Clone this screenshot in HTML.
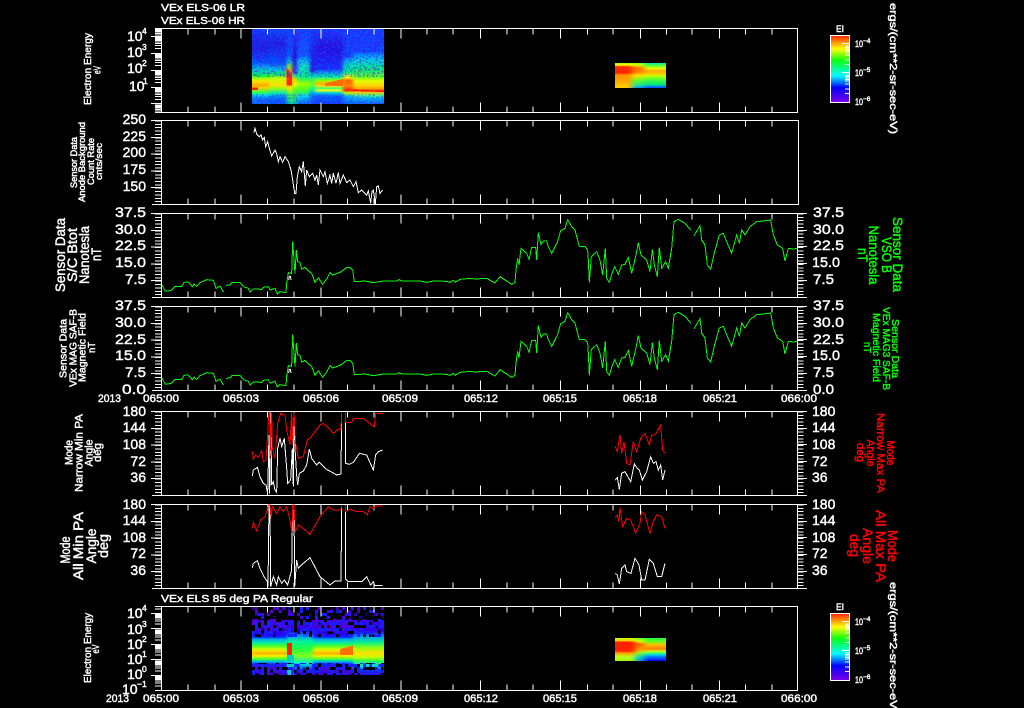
<!DOCTYPE html>
<html><head><meta charset="utf-8"><title>VEx ELS plot</title>
<style>
html,body{margin:0;padding:0;background:#000;width:1024px;height:708px;overflow:hidden}
svg{display:block}
text{font-family:"Liberation Sans",sans-serif}
.w{fill:#fff;stroke:#fff;stroke-width:.45}
.g{fill:#00ff00;stroke:#00ff00;stroke-width:.45}
.r{fill:#ff0000;stroke:#ff0000;stroke-width:.45}
.c{shape-rendering:crispEdges}
.pl{fill:none;stroke-width:1;vector-effect:non-scaling-stroke;shape-rendering:crispEdges}
.pl polyline{vector-effect:non-scaling-stroke}
</style></head><body>
<svg xmlns="http://www.w3.org/2000/svg" width="1024" height="708" viewBox="0 0 1024 708">
<defs>
<linearGradient id="cb" x1="0" y1="0" x2="0" y2="1"><stop offset="0" stop-color="#ff2000"/><stop offset=".1" stop-color="#ff9000"/><stop offset=".2" stop-color="#ffff00"/><stop offset=".37" stop-color="#10ff10"/><stop offset=".6" stop-color="#00ffff"/><stop offset=".78" stop-color="#0000ff"/><stop offset="1" stop-color="#8000e8"/></linearGradient>

<linearGradient id="a" x1="0" y1="0" x2="0" y2="1"><stop offset="0" stop-color="#0848ff"/><stop offset=".09" stop-color="#1030f0"/><stop offset=".27" stop-color="#1820e0"/><stop offset=".44" stop-color="#0050ff"/><stop offset=".51" stop-color="#00a8f0"/><stop offset=".58" stop-color="#00e0a0"/><stop offset=".62" stop-color="#00ff40"/><stop offset=".66" stop-color="#a0ff00"/><stop offset=".70" stop-color="#ffe000"/><stop offset=".75" stop-color="#ffa800"/><stop offset=".78" stop-color="#ffd000"/><stop offset=".84" stop-color="#40ff40"/><stop offset=".88" stop-color="#00e0e0"/><stop offset=".92" stop-color="#0080ff"/><stop offset="1" stop-color="#1060ff"/></linearGradient>
<linearGradient id="b" x1="0" y1="0" x2="0" y2="1"><stop offset="0" stop-color="#0848ff"/><stop offset=".2" stop-color="#1820e0"/><stop offset=".45" stop-color="#0050ff"/><stop offset=".55" stop-color="#00c8e0"/><stop offset=".6" stop-color="#00f060"/><stop offset=".66" stop-color="#c0ff00"/><stop offset=".75" stop-color="#ffe000"/><stop offset=".8" stop-color="#80ff20"/><stop offset=".86" stop-color="#00e0c0"/><stop offset=".92" stop-color="#0070ff"/><stop offset="1" stop-color="#1050ff"/></linearGradient>
<linearGradient id="hot" x1="0" y1="0" x2="0" y2="1"><stop offset="0" stop-color="#1040ff"/><stop offset=".35" stop-color="#0060ff"/><stop offset=".44" stop-color="#00d0c0"/><stop offset=".5" stop-color="#a0ff00"/><stop offset=".56" stop-color="#ffa000"/><stop offset=".72" stop-color="#ffc000"/><stop offset=".8" stop-color="#ffe000"/><stop offset=".87" stop-color="#40ff30"/><stop offset="1" stop-color="#00e8a0"/></linearGradient>
<linearGradient id="d" x1="0" y1="0" x2="0" y2="1"><stop offset="0" stop-color="#1040ff"/><stop offset=".36" stop-color="#3000e0"/><stop offset=".58" stop-color="#2020ff"/><stop offset=".62" stop-color="#00ff80"/><stop offset=".67" stop-color="#ffc000"/><stop offset=".73" stop-color="#ffff00"/><stop offset=".8" stop-color="#60ff20"/><stop offset="1" stop-color="#00d0a0"/></linearGradient>
<linearGradient id="e" x1="0" y1="0" x2="0" y2="1"><stop offset="0" stop-color="#1040ff"/><stop offset=".36" stop-color="#0860ff"/><stop offset=".42" stop-color="#00c0f0"/><stop offset=".49" stop-color="#00f0c0"/><stop offset=".64" stop-color="#00f080"/><stop offset=".73" stop-color="#a0ff00"/><stop offset=".82" stop-color="#40ff30"/><stop offset=".91" stop-color="#00d0ff"/><stop offset="1" stop-color="#1060ff"/></linearGradient>
<linearGradient id="f" x1="0" y1="0" x2="0" y2="1"><stop offset="0" stop-color="#1040ff"/><stop offset=".55" stop-color="#2010e0"/><stop offset=".62" stop-color="#00e0c0"/><stop offset=".73" stop-color="#60ff20"/><stop offset=".8" stop-color="#00ffa0"/><stop offset=".87" stop-color="#0080ff"/><stop offset="1" stop-color="#2040ff"/></linearGradient>
<linearGradient id="g" x1="0" y1="0" x2="0" y2="1"><stop offset="0" stop-color="#1040ff"/><stop offset=".25" stop-color="#2010e0"/><stop offset=".53" stop-color="#1030ff"/><stop offset=".58" stop-color="#00a0f0"/><stop offset=".64" stop-color="#00f0a0"/><stop offset=".69" stop-color="#a0ff00"/><stop offset=".73" stop-color="#ffb000"/><stop offset=".76" stop-color="#ffe000"/><stop offset=".79" stop-color="#40ff80"/><stop offset=".82" stop-color="#ffff00"/><stop offset=".85" stop-color="#00d0e0"/><stop offset=".9" stop-color="#0060ff"/><stop offset="1" stop-color="#1040ff"/></linearGradient>
<linearGradient id="h" x1="0" y1="0" x2="0" y2="1"><stop offset="0" stop-color="#1040ff"/><stop offset=".36" stop-color="#1040ff"/><stop offset=".42" stop-color="#00b0f0"/><stop offset=".49" stop-color="#00e0c0"/><stop offset=".58" stop-color="#00f080"/><stop offset=".64" stop-color="#ffff00"/><stop offset=".69" stop-color="#ff6000"/><stop offset=".76" stop-color="#ff8000"/><stop offset=".82" stop-color="#ff2000"/><stop offset=".85" stop-color="#c0ff00"/><stop offset=".9" stop-color="#00b0ff"/><stop offset="1" stop-color="#1060ff"/></linearGradient>
<linearGradient id="i" x1="0" y1="0" x2="0" y2="1"><stop offset="0" stop-color="#1040ff"/><stop offset=".29" stop-color="#1040ff"/><stop offset=".36" stop-color="#00a0ff"/><stop offset=".42" stop-color="#00d0e0"/><stop offset=".53" stop-color="#00f080"/><stop offset=".64" stop-color="#60ff20"/><stop offset=".69" stop-color="#e0ff00"/><stop offset=".76" stop-color="#ffd000"/><stop offset=".8" stop-color="#ffa000"/><stop offset=".82" stop-color="#ff2000"/><stop offset=".84" stop-color="#ffc000"/><stop offset=".89" stop-color="#40ff80"/><stop offset=".92" stop-color="#00c0ff"/><stop offset="1" stop-color="#1060ff"/></linearGradient>

<linearGradient id="p" x1="0" y1="0" x2="0" y2="1"><stop offset="0" stop-color="#5000d0"/><stop offset=".3" stop-color="#5000e0"/><stop offset=".42" stop-color="#2000ff"/><stop offset=".45" stop-color="#0040ff"/><stop offset=".47" stop-color="#00a0f0"/><stop offset=".52" stop-color="#00e8b0"/><stop offset=".57" stop-color="#40ff30"/><stop offset=".62" stop-color="#d0ff00"/><stop offset=".66" stop-color="#ffd000"/><stop offset=".68" stop-color="#ffb000"/><stop offset=".72" stop-color="#f0f000"/><stop offset=".76" stop-color="#60ff20"/><stop offset=".79" stop-color="#00e0a0"/><stop offset=".81" stop-color="#00a0ff"/><stop offset=".84" stop-color="#2020ff"/><stop offset=".9" stop-color="#4010e0"/><stop offset="1" stop-color="#4000d0"/></linearGradient>
<linearGradient id="p2" x1="0" y1="0" x2="0" y2="1"><stop offset="0" stop-color="#5000d0"/><stop offset=".35" stop-color="#3000f0"/><stop offset=".42" stop-color="#0090f0"/><stop offset=".5" stop-color="#00f0a0"/><stop offset=".62" stop-color="#20ff40"/><stop offset=".72" stop-color="#80ff20"/><stop offset=".82" stop-color="#00f0c0"/><stop offset=".88" stop-color="#0090f0"/><stop offset=".93" stop-color="#2020ff"/><stop offset="1" stop-color="#4000d0"/></linearGradient>
<linearGradient id="p3" x1="0" y1="0" x2="0" y2="1"><stop offset="0" stop-color="#5000d0"/><stop offset=".36" stop-color="#3000f0"/><stop offset=".44" stop-color="#00a0f0"/><stop offset=".52" stop-color="#00f090"/><stop offset=".6" stop-color="#90ff10"/><stop offset=".68" stop-color="#ffe000"/><stop offset=".74" stop-color="#c0ff00"/><stop offset=".8" stop-color="#20ff60"/><stop offset=".88" stop-color="#00d0e0"/><stop offset=".92" stop-color="#0040ff"/><stop offset="1" stop-color="#4000d0"/></linearGradient>

<linearGradient id="s1" x1="0" y1="0" x2="0" y2="1"><stop offset="0" stop-color="#a0ff00"/><stop offset=".08" stop-color="#ffff00"/><stop offset=".15" stop-color="#ff3000"/><stop offset=".39" stop-color="#ff2000"/><stop offset=".48" stop-color="#ff9000"/><stop offset=".68" stop-color="#ffa000"/><stop offset=".88" stop-color="#ffc000"/><stop offset="1" stop-color="#ffd000"/></linearGradient>
<linearGradient id="s2" x1="0" y1="0" x2="0" y2="1"><stop offset="0" stop-color="#80ff20"/><stop offset=".08" stop-color="#e0ff00"/><stop offset=".2" stop-color="#ff7000"/><stop offset=".35" stop-color="#ff8000"/><stop offset=".5" stop-color="#ffe000"/><stop offset=".7" stop-color="#60ff20"/><stop offset=".9" stop-color="#20e0a0"/><stop offset="1" stop-color="#0090ff"/></linearGradient>
<linearGradient id="s3" x1="0" y1="0" x2="0" y2="1"><stop offset="0" stop-color="#00e0d0"/><stop offset=".08" stop-color="#40ff40"/><stop offset=".21" stop-color="#e0ff00"/><stop offset=".31" stop-color="#ffb000"/><stop offset=".41" stop-color="#ffc000"/><stop offset=".52" stop-color="#c0ff00"/><stop offset=".68" stop-color="#40ff40"/><stop offset=".88" stop-color="#00e080"/><stop offset=".94" stop-color="#0080ff"/><stop offset="1" stop-color="#2040ff"/></linearGradient>
<linearGradient id="t1" x1="0" y1="0" x2="0" y2="1"><stop offset="0" stop-color="#c0ff00"/><stop offset=".12" stop-color="#ffd000"/><stop offset=".18" stop-color="#ff2000"/><stop offset=".56" stop-color="#ff2000"/><stop offset=".66" stop-color="#ffa000"/><stop offset=".81" stop-color="#c0ff20"/><stop offset="1" stop-color="#a0ff00"/></linearGradient>
<linearGradient id="t2" x1="0" y1="0" x2="0" y2="1"><stop offset="0" stop-color="#60ff20"/><stop offset=".15" stop-color="#e0ff00"/><stop offset=".27" stop-color="#ff6000"/><stop offset=".52" stop-color="#ffa000"/><stop offset=".66" stop-color="#80ff20"/><stop offset=".85" stop-color="#00d0d0"/><stop offset="1" stop-color="#00a0d0"/></linearGradient>
<linearGradient id="t3" x1="0" y1="0" x2="0" y2="1"><stop offset="0" stop-color="#20ff40"/><stop offset=".15" stop-color="#60ff20"/><stop offset=".29" stop-color="#ffc000"/><stop offset=".47" stop-color="#ff8000"/><stop offset=".59" stop-color="#c0ff00"/><stop offset=".69" stop-color="#00ffc0"/><stop offset=".81" stop-color="#0080ff"/><stop offset="1" stop-color="#1000ff"/></linearGradient>

<filter id="bx" filterUnits="userSpaceOnUse" x="230" y="0" width="180" height="708" color-interpolation-filters="sRGB"><feGaussianBlur stdDeviation="1.6 0"/></filter>
<filter id="bs" filterUnits="userSpaceOnUse" x="590" y="0" width="100" height="708" color-interpolation-filters="sRGB"><feGaussianBlur stdDeviation="3 0"/></filter>
<filter id="nP" x="0" y="0" width="1" height="1" color-interpolation-filters="sRGB"><feTurbulence type="fractalNoise" baseFrequency=".55" numOctaves="1" seed="3"/><feColorMatrix values="0 0 0 0 .35  0 0 0 0 0  0 0 0 0 .9  6 0 0 0 -3"/></filter>
<filter id="nC" x="0" y="0" width="1" height="1" color-interpolation-filters="sRGB"><feTurbulence type="fractalNoise" baseFrequency=".6" numOctaves="1" seed="9"/><feColorMatrix values="0 0 0 0 0  0 0 0 0 .6  0 0 0 0 1  6 0 0 0 -3.4"/></filter>
<filter id="kA" filterUnits="userSpaceOnUse" x="252" y="607" width="132" height="68" color-interpolation-filters="sRGB"><feTurbulence type="fractalNoise" baseFrequency=".31" numOctaves="1" seed="5"/><feColorMatrix values="0 0 0 0 0  0 0 0 0 0  0 0 0 0 0  30 0 0 0 -14.1" result="t"/><feFlood x="253" y="608" width="1" height="1" flood-color="#000"/><feComposite width="3" height="3"/><feTile result="q"/><feComposite in="t" in2="q" operator="in"/><feMorphology operator="dilate" radius="1"/></filter>
<filter id="kB" filterUnits="userSpaceOnUse" x="252" y="607" width="132" height="68" color-interpolation-filters="sRGB"><feTurbulence type="fractalNoise" baseFrequency=".31" numOctaves="1" seed="17"/><feColorMatrix values="0 0 0 0 0  0 0 0 0 0  0 0 0 0 0  30 0 0 0 -18" result="t"/><feFlood x="253" y="608" width="1" height="1" flood-color="#000"/><feComposite width="3" height="3"/><feTile result="q"/><feComposite in="t" in2="q" operator="in"/><feMorphology operator="dilate" radius="1"/></filter>
<filter id="kD" filterUnits="userSpaceOnUse" x="252" y="607" width="132" height="68" color-interpolation-filters="sRGB"><feTurbulence type="fractalNoise" baseFrequency=".31" numOctaves="1" seed="23"/><feColorMatrix values="0 0 0 0 .08  0 0 0 0 .12  0 0 0 0 1  30 0 0 0 -16.5" result="t"/><feFlood x="253" y="608" width="1" height="1" flood-color="#000"/><feComposite width="3" height="3"/><feTile result="q"/><feComposite in="t" in2="q" operator="in"/><feMorphology operator="dilate" radius="1"/></filter>

<clipPath id="cl1"><rect x="150" y="28" width="12" height="85"/></clipPath>
<clipPath id="cl7"><rect x="150" y="606" width="12" height="85"/></clipPath>
<clipPath id="sA"><rect x="252" y="29" width="132" height="75"/></clipPath>
<clipPath id="sB"><rect x="252" y="607" width="132" height="68"/></clipPath>
<clipPath id="sC"><rect x="615" y="63" width="51" height="25"/></clipPath>
<clipPath id="sD"><rect x="615" y="638" width="51" height="23"/></clipPath>
<clipPath id="sE"><rect x="252" y="607" width="132" height="30"/><rect x="252" y="663" width="132" height="12"/></clipPath>
<clipPath id="sF"><rect x="252" y="607" width="132" height="13"/></clipPath>

<path id="xt" d="M188 0v6M215 0v6M267.5 0v6M294 0v6M347.5 0v6M374 0v6M427 0v6M453 0v6M507 0v6M533 0v6M587.5 0v6M613 0v6M666.5 0v6M692 0v6M745.5 0v6M772 0v6M241 0v10M321 0v10M401 0v10M480.5 0v10M560.5 0v10M640.5 0v10M719.5 0v10M188 84v-6M215 84v-6M267.5 84v-6M294 84v-6M347.5 84v-6M374 84v-6M427 84v-6M453 84v-6M507 84v-6M533 84v-6M587.5 84v-6M613 84v-6M666.5 84v-6M692 84v-6M745.5 84v-6M772 84v-6M241 84v-10M321 84v-10M401 84v-10M480.5 84v-10M560.5 84v-10M640.5 84v-10M719.5 84v-10"/>
<path id="ly" d="M162 0H151M162 16.8H151M162 33.6H151M162 50.4H151M162 67.2H151"/>
<path id="dec1" d="M155 -5.06H161M155 -8.01H161M155 -10.11H161M155 -11.74H161M155 -13.07H161M155 -14.2H161M155 -15.17H161M155 -16.03H161"/>
<path id="dec7" d="M155 -4.64H161M155 -7.35H161M155 -9.27H161M155 -10.76H161M155 -11.98H161M155 -13.01H161M155 -13.9H161M155 -14.7H161"/>
<path id="cbt" d="M842 0H849M845 2.4H849M845 4H849M845 5.4H849M845 6.8H849M845 8.7H849M845 11.7H849M845 16.4H849M845 21H849"/>
</defs>
<rect width="1024" height="708" fill="#000"/>

<!-- spectrogram 1 -->
<g class="c" clip-path="url(#sA)">
<g filter="url(#bx)">
<rect x="240" y="29" width="29" height="75" fill="url(#a)"/>
<rect x="269" y="29" width="18" height="75" fill="url(#b)"/>
<rect x="287" y="29" width="5.5" height="75" fill="url(#hot)"/>
<rect x="292.5" y="29" width="4.5" height="75" fill="url(#d)"/>
<rect x="297" y="29" width="13" height="75" fill="url(#e)"/>
<rect x="310" y="29" width="5" height="75" fill="url(#f)"/>
<rect x="315" y="29" width="28" height="75" fill="url(#g)"/>
<rect x="343" y="29" width="10" height="75" fill="url(#h)"/>
<rect x="353" y="29" width="43" height="75" fill="url(#i)"/>
</g>
<polygon points="286.7,68.7 291.7,73.7 292.3,85.3 286.7,85.3" fill="#ff2800"/>
<rect x="252" y="87.5" width="6" height="2.5" fill="#ff2000"/>
<polygon points="325,83 343,79 343,86 325,86" fill="#ff7000"/>
<polygon points="353,89.5 384,91 384,92 353,91" fill="#ff1000"/>
<rect x="252" y="29" width="132" height="48" filter="url(#nP)" opacity=".55"/>
<rect x="252" y="29" width="132" height="48" filter="url(#nC)" opacity=".5"/>
<rect x="252" y="94" width="132" height="10" filter="url(#nC)" opacity=".6"/>
<rect x="252" y="94" width="132" height="10" filter="url(#nP)" opacity=".4"/>
</g>
<!-- spectrogram 1 right -->
<g class="c" clip-path="url(#sC)"><g filter="url(#bs)">
<rect x="600" y="63" width="32" height="25" fill="url(#s1)"/>
<rect x="632" y="63" width="12" height="25" fill="url(#s2)"/>
<rect x="644" y="63" width="36" height="25" fill="url(#s3)"/>
</g></g>
<!-- spectrogram 7 -->
<g class="c" clip-path="url(#sB)">
<g filter="url(#bx)">
<rect x="240" y="607" width="47" height="68" fill="url(#p)"/>
<rect x="287" y="607" width="26" height="68" fill="url(#p2)"/>
<rect x="313" y="607" width="40" height="68" fill="url(#p)"/>
<rect x="353" y="607" width="43" height="68" fill="url(#p3)"/>
</g>
<rect x="287" y="643" width="5" height="13" fill="#ff2000"/>
<rect x="287" y="655" width="7" height="20" fill="#00d0c8"/>
<polygon points="340,649 353,645.5 353,655 340,655" fill="#ff7000"/>
<g clip-path="url(#sE)"><rect x="252" y="607" width="132" height="68" filter="url(#kD)"/><rect x="252" y="607" width="132" height="68" filter="url(#kB)"/></g>
<g clip-path="url(#sF)"><rect x="252" y="607" width="132" height="68" filter="url(#kA)"/></g>
<rect x="294" y="618" width="3" height="14" fill="#000"/>
</g>
<!-- spectrogram 7 right -->
<g class="c" clip-path="url(#sD)"><g filter="url(#bs)">
<rect x="600" y="638" width="35" height="23" fill="url(#t1)"/>
<rect x="635" y="638" width="9" height="23" fill="url(#t2)"/>
<rect x="644" y="638" width="36" height="23" fill="url(#t3)"/>
</g></g>

<!-- Frames -->
<g stroke="#fff" stroke-width="1" fill="none" class="c">
<path d="M155 28.5H797.5V112.5H155M161.5 28.5V112.5"/>
<path d="M152 120.5H798.5V204.5H152M161.5 120.5V204.5"/>
<path d="M152 213.5H807M152 297.5H807M161.5 213.5V297.5M797.5 213.5V297.5"/>
<path d="M152 306.5H807M152 390.5H807M161.5 306.5V390.5M797.5 306.5V390.5"/>
<path d="M152 411.5H807M152 495.5H807M161.5 411.5V495.5M797.5 411.5V495.5"/>
<path d="M152 504.5H807M152 588.5H807M161.5 504.5V588.5M797.5 504.5V588.5"/>
<path d="M155 606.5H797.5V690.5H155M161.5 606.5V690.5"/>
<use href="#xt" y="28.5"/><use href="#xt" y="120.5"/><use href="#xt" y="213.5"/><use href="#xt" y="306.5"/><use href="#xt" y="411.5"/><use href="#xt" y="504.5"/><use href="#xt" y="606.5"/>
<g clip-path="url(#cl1)">
<use href="#dec1" y="36.5"/><use href="#dec1" y="53.5"/><use href="#dec1" y="70.5"/><use href="#dec1" y="87.5"/><use href="#dec1" y="104.5"/><use href="#dec1" y="121"/><use href="#dec1" y="45"/>
<path d="M151 36.5H161M151 53.5H161M151 70.5H161M151 87.5H161M151 103.5H161"/>
</g>
<g clip-path="url(#cl7)">
<use href="#dec7" y="613.5"/><use href="#dec7" y="628.5"/><use href="#dec7" y="644.5"/><use href="#dec7" y="659.5"/><use href="#dec7" y="675.5"/><use href="#dec7" y="690.5"/>
<path d="M151 613.5H161M151 628.5H161M151 644.5H161M151 659.5H161M151 675.5H161"/>
</g>
<!-- hatch -->
<g stroke-width="6" stroke-dasharray="1 2.36">
<path d="M158 120.5V204.5M158 213.5V297.5M158 306.5V390.5M158 411.5V495.5M158 504.5V588.5"/>
<path d="M800.5 213.5V297.5M800.5 306.5V390.5M800.5 411.5V495.5M800.5 504.5V588.5"/>
</g>
<use href="#ly" y="120.5"/><use href="#ly" y="213.5"/><use href="#ly" y="306.5"/><use href="#ly" y="411.5"/><use href="#ly" y="504.5"/>
<path d="M797 230.5H807M797 246.5H807M797 263.5H807M797 280.5H807M797 323.5H807M797 339.5H807M797 356.5H807M797 373.5H807M797 428.5H807M797 444.5H807M797 461.5H807M797 478.5H807M797 521.5H807M797 537.5H807M797 554.5H807M797 571.5H807"/>
<!-- colorbars -->
<rect x="830.5" y="35.5" width="19" height="67" fill="url(#cb)" stroke="#fff"/>
<rect x="830.5" y="613.5" width="19" height="67" fill="url(#cb)" stroke="#fff"/>
<use href="#cbt" y="43.5"/><use href="#cbt" y="72.5"/><use href="#cbt" y="621.5"/><use href="#cbt" y="650.5"/>
</g>

<!-- Panel 2 curve -->
<g transform="scale(.33333)" class="pl" stroke="#fff">
<polyline class="pl" points="762,397 765,385 770,402 778,410 783,405 788,420 793,412 797,440 803,425 808,445 815,468 825,450 830,462 835,485 840,470 848,487 855,470 865,485 873,510 878,540 884,580 888,580 892,530 898,500 905,515 910,485 916,558 920,510 928,530 938,520 945,540 950,525 955,555 960,510 965,520 970,530 975,515 982,550 990,525 995,550 1000,520 1008,550 1015,518 1020,550 1030,525 1040,548 1050,540 1060,560 1068,545 1075,578 1085,570 1100,585 1105,572 1112,610 1116,575 1120,570 1126,612 1130,560 1135,558 1140,580 1148,570"/>
</g>

<!-- Panel 3/4 curves -->
<g transform="translate(0,205) scale(.33333)" class="pl" stroke="#00ff00">
<g id="m1">
<polyline class="pl" points="485,238 495,258 512,257 525,245 545,244 552,232 565,231 577,245 582,237 590,244 600,233 620,224 640,226 648,250 660,243 670,261"/>
<polyline class="pl" points="678,241 690,240 695,233 720,232 730,245 745,250 750,261 760,252 785,253 790,247 805,245 810,255 825,250 832,267 840,260 858,263 860,235 865,203 875,205 878,110 882,165 885,205 889,135 893,170 900,172 905,192 915,187 925,198 935,205 945,232 955,218 968,238 980,222 990,203 998,210 1020,202 1040,188 1050,187 1058,195 1063,230 1095,228 1120,233 1150,228 1190,228 1197,224 1205,228 1260,228"/>
<polyline class="pl" stroke="#fff" points="866,225 868,214 871,214 873,225"/>
</g>
<use href="#m1" y="279"/>
</g>
<g transform="translate(420,205) scale(.33333)" class="pl" stroke="#00ff00">
<g id="m2">
<polyline class="pl" points="0,228 20,232 40,228 80,229 90,232 100,226 105,232 120,223 150,220 165,222 200,220 225,234 240,215 255,225 275,238 285,232 288,195 293,160 297,180 303,130 312,138 320,145 327,163 335,127 347,127 350,165 355,83 363,118 372,107 380,108 385,125 395,145 405,125 412,112 422,77 435,70 443,44 455,65 465,75 478,125 495,125 503,135 505,165 508,232 514,155 530,140 540,165 548,210 556,130 560,220 568,232 576,205 584,185 595,208 605,180 615,178 625,157 635,205 648,150 655,113 663,150 680,165 690,200 697,133 703,180 712,215 718,127 725,190 737,170 745,190 755,130 762,50 775,43 795,55 812,75"/>
<polyline class="pl" points="822,92 840,62 845,105 855,120 862,180 872,192 884,140 898,90"/>
</g>
<use href="#m2" y="279"/>
</g>
<g transform="translate(720,205) scale(.33333)" class="pl" stroke="#00ff00">
<g id="m3"><polyline class="pl" points="-2,90 10,85 20,110 35,145 50,90 58,115 65,75 75,90 90,65 110,50 130,48 152,45 160,90 172,120 188,130 195,168 205,130 220,132 232,130"/></g>
<use href="#m3" y="279"/>
</g>

<!-- Panel 5/6 curves -->
<g transform="translate(240,405) scale(.33333)" class="pl">
<polyline class="pl" stroke="#fff" points="37,213 40,195 52,187 60,215 70,235 78,240 83,265 87,90 89,265 92,22 95,240 100,230 105,255 110,262 113,130 120,100 125,125 133,100 140,190 143,235 152,225 157,130 160,245 162,22 165,130 170,210 173,240 178,205 190,198 200,180 208,132 215,160 230,180 238,172 258,192 278,203 290,210 303,207 305,22"/>
<polyline class="pl" stroke="#fff" points="317,22 317,175 328,178 340,172 358,145 380,150 400,195 407,150 415,140 428,135"/>
<polyline class="pl" stroke="#ff0000" points="37,140 40,163 47,150 55,157 65,137 70,170 78,165 83,90 87,22 90,22 90,160 95,22 96,125 105,160 113,55 122,25 135,30 140,75 150,120 155,22 157,118 162,22 167,115 175,160 190,155 202,105 212,97 240,60 248,55 262,65 280,85 295,72 303,75 305,22"/>
<polyline class="pl" stroke="#ff0000" points="317,22 317,52 335,52 340,40 370,40 395,60 403,65 407,25 428,25"/>
<polyline class="pl" stroke="#fff" points="37,488 40,475 52,467 60,490 72,515 82,530 84,545 87,300 90,300 92,545 100,515 110,540 115,515 125,535 133,525 143,540 155,495 158,300 162,300 164,545 170,465 175,490 190,475 210,458 240,515 270,540 285,528 303,528 305,300"/>
<polyline class="pl" stroke="#fff" points="317,300 317,522 325,530 345,530 365,530 380,515 392,540 400,530 405,542 428,542"/>
<polyline class="pl" stroke="#ff0000" points="37,370 40,352 50,378 62,345 75,335 80,320 85,300 90,300 93,340 97,305 110,325 120,305 130,320 140,305 150,345 156,382 158,300 162,300 166,380 175,360 195,375 210,388 240,335 265,305 280,315 303,315 305,300"/>
<polyline class="pl" stroke="#ff0000" points="317,300 317,320 330,312 350,320 370,320 382,330 390,305 400,312 405,303 428,303"/>
</g>
<g transform="translate(600,400) scale(.33333)" class="pl">
<polyline class="pl" stroke="#ff0000" points="46,140 52,155 60,103 65,160 72,125 80,190 90,195 100,125 110,155 122,115 135,100 148,135 155,105 165,105 182,75 188,150 195,160"/>
<polyline class="pl" stroke="#fff" points="46,240 52,232 58,268 65,220 75,215 92,245 103,192 112,205 118,210 127,240 140,215 152,170 160,190 168,185 175,210 182,195 188,240 195,210"/>
<polyline class="pl" stroke="#ff0000" points="46,352 52,345 57,365 60,322 68,380 80,355 92,360 107,400 120,370 125,335 135,345 150,400 160,365 170,345 185,350 195,385"/>
<polyline class="pl" stroke="#fff" points="46,520 52,525 58,552 65,505 75,495 80,515 93,520 105,475 117,495 125,540 135,540 148,478 160,490 172,530 185,530 195,490"/>
</g>

<!-- Titles -->
<g class="w" font-size="10.5">
<text x="161" y="11" textLength="84" lengthAdjust="spacingAndGlyphs">VEx ELS-06 LR</text>
<text x="161" y="24" textLength="84" lengthAdjust="spacingAndGlyphs">VEx ELS-06 HR</text>
<text x="161" y="602" textLength="152" lengthAdjust="spacingAndGlyphs">VEx ELS 85 deg PA Regular</text>
</g>

<!-- Left y tick labels -->
<g class="w" font-size="14" text-anchor="end">
<text x="146" y="124">250</text><text x="146" y="141">225</text><text x="146" y="157">200</text><text x="146" y="174">175</text><text x="146" y="191">150</text>
<text x="146" y="217" textLength="31" lengthAdjust="spacingAndGlyphs">37.5</text><text x="146" y="234" textLength="31" lengthAdjust="spacingAndGlyphs">30.0</text><text x="146" y="250" textLength="31" lengthAdjust="spacingAndGlyphs">22.5</text><text x="146" y="267" textLength="31" lengthAdjust="spacingAndGlyphs">15.0</text><text x="146" y="284" textLength="21" lengthAdjust="spacingAndGlyphs">7.5</text>
<text x="146" y="310" textLength="31" lengthAdjust="spacingAndGlyphs">37.5</text><text x="146" y="327" textLength="31" lengthAdjust="spacingAndGlyphs">30.0</text><text x="146" y="344" textLength="31" lengthAdjust="spacingAndGlyphs">22.5</text><text x="146" y="360" textLength="31" lengthAdjust="spacingAndGlyphs">15.0</text><text x="146" y="377" textLength="21" lengthAdjust="spacingAndGlyphs">7.5</text><text x="146" y="394" textLength="24" lengthAdjust="spacingAndGlyphs">0.0</text>
<text x="146" y="416">180</text><text x="146" y="432">144</text><text x="146" y="449">108</text><text x="146" y="466">72</text><text x="146" y="482">36</text>
<text x="146" y="509">180</text><text x="146" y="525">144</text><text x="146" y="542">108</text><text x="146" y="558">72</text><text x="146" y="575">36</text>
</g>
<!-- Log labels -->
<g class="w" font-size="14">
<text x="127" y="41">10</text><text x="127" y="57">10</text><text x="127" y="73">10</text><text x="129" y="91">10</text>
<text x="127" y="618">10</text><text x="127" y="634">10</text><text x="127" y="649">10</text><text x="127" y="664">10</text><text x="127" y="679">10</text><text x="122" y="694">10</text>
</g>
<g class="w" font-size="8.5">
<text x="142" y="34">4</text><text x="142" y="50">3</text><text x="142" y="66">2</text><text x="143" y="84">1</text>
<text x="142" y="611">4</text><text x="142" y="627">3</text><text x="142" y="642">2</text><text x="142" y="657">1</text><text x="142" y="672">0</text><text x="137" y="687">−1</text>
</g>

<!-- Right y tick labels -->
<g class="w" font-size="14">
<text x="813" y="217" textLength="31" lengthAdjust="spacingAndGlyphs">37.5</text><text x="813" y="234" textLength="31" lengthAdjust="spacingAndGlyphs">30.0</text><text x="813" y="250" textLength="31" lengthAdjust="spacingAndGlyphs">22.5</text><text x="812" y="267" textLength="28" lengthAdjust="spacingAndGlyphs">15.0</text><text x="813" y="284" textLength="21" lengthAdjust="spacingAndGlyphs">7.5</text>
<text x="813" y="310" textLength="31" lengthAdjust="spacingAndGlyphs">37.5</text><text x="813" y="327" textLength="31" lengthAdjust="spacingAndGlyphs">30.0</text><text x="813" y="344" textLength="31" lengthAdjust="spacingAndGlyphs">22.5</text><text x="812" y="360" textLength="28" lengthAdjust="spacingAndGlyphs">15.0</text><text x="813" y="377" textLength="21" lengthAdjust="spacingAndGlyphs">7.5</text><text x="813" y="394" textLength="21" lengthAdjust="spacingAndGlyphs">0.0</text>
<text x="812" y="416">180</text><text x="812" y="432">144</text><text x="812" y="449">108</text><text x="812" y="466">72</text><text x="812" y="482">36</text>
<text x="812" y="509">180</text><text x="812" y="525">144</text><text x="812" y="542">108</text><text x="812" y="558">72</text><text x="812" y="575">36</text>
</g>

<!-- X labels -->
<g class="w" font-size="11">
<text x="98" y="402" textLength="23" lengthAdjust="spacingAndGlyphs">2013</text>
<text x="143" y="402" textLength="36" lengthAdjust="spacingAndGlyphs">065:00</text><text x="223" y="402" textLength="36" lengthAdjust="spacingAndGlyphs">065:03</text><text x="303" y="402" textLength="36" lengthAdjust="spacingAndGlyphs">065:06</text><text x="382" y="402" textLength="36" lengthAdjust="spacingAndGlyphs">065:09</text><text x="464" y="402" textLength="34" lengthAdjust="spacingAndGlyphs">065:12</text><text x="543" y="402" textLength="34" lengthAdjust="spacingAndGlyphs">065:15</text><text x="623" y="402" textLength="34" lengthAdjust="spacingAndGlyphs">065:18</text><text x="703" y="402" textLength="34" lengthAdjust="spacingAndGlyphs">065:21</text><text x="781" y="402" textLength="36" lengthAdjust="spacingAndGlyphs">066:00</text>
<text x="106" y="702" textLength="23" lengthAdjust="spacingAndGlyphs">2013</text>
<text x="143" y="702" textLength="36" lengthAdjust="spacingAndGlyphs">065:00</text><text x="223" y="702" textLength="36" lengthAdjust="spacingAndGlyphs">065:03</text><text x="303" y="702" textLength="36" lengthAdjust="spacingAndGlyphs">065:06</text><text x="382" y="702" textLength="36" lengthAdjust="spacingAndGlyphs">065:09</text><text x="464" y="702" textLength="34" lengthAdjust="spacingAndGlyphs">065:12</text><text x="543" y="702" textLength="34" lengthAdjust="spacingAndGlyphs">065:15</text><text x="623" y="702" textLength="34" lengthAdjust="spacingAndGlyphs">065:18</text><text x="703" y="702" textLength="34" lengthAdjust="spacingAndGlyphs">065:21</text><text x="781" y="702" textLength="36" lengthAdjust="spacingAndGlyphs">066:00</text>
</g>

<!-- Left rotated labels -->
<g class="w" text-anchor="middle" font-size="10">
<text transform="translate(91,69) rotate(-90)" textLength="72" lengthAdjust="spacingAndGlyphs">Electron Energy</text>
<text transform="translate(100.5,70) rotate(-90)" textLength="8" lengthAdjust="spacingAndGlyphs">eV</text>
<text transform="translate(91,648) rotate(-90)" textLength="70" lengthAdjust="spacingAndGlyphs">Electron Energy</text>
<text transform="translate(99,649) rotate(-90)" textLength="9" lengthAdjust="spacingAndGlyphs">eV</text>
<g font-size="9">
<text transform="translate(77,162.5) rotate(-90)" textLength="51" lengthAdjust="spacingAndGlyphs">Sensor Data</text>
<text transform="translate(85,162) rotate(-90)" textLength="80" lengthAdjust="spacingAndGlyphs">Anode Background</text>
<text transform="translate(94,161.5) rotate(-90)" textLength="47" lengthAdjust="spacingAndGlyphs">Count Rate</text>
<text transform="translate(102,161.5) rotate(-90)" textLength="37" lengthAdjust="spacingAndGlyphs">cnts/sec</text>
</g>
<g font-size="13.5">
<text transform="translate(65,255) rotate(-90)" textLength="74" lengthAdjust="spacingAndGlyphs">Sensor Data</text>
<text transform="translate(77,255) rotate(-90)" textLength="54" lengthAdjust="spacingAndGlyphs">S/C Btot</text>
<text transform="translate(89,255) rotate(-90)" textLength="58" lengthAdjust="spacingAndGlyphs">Nanotesla</text>
<text transform="translate(101,254.5) rotate(-90)" textLength="13" lengthAdjust="spacingAndGlyphs">nT</text>
</g>
<text transform="translate(66.5,348.5) rotate(-90)" textLength="59" lengthAdjust="spacingAndGlyphs">Sensor Data</text>
<text transform="translate(76.5,348) rotate(-90)" textLength="78" lengthAdjust="spacingAndGlyphs">VEx MAG SAF-B</text>
<text transform="translate(85.5,347.5) rotate(-90)" textLength="69" lengthAdjust="spacingAndGlyphs">Magnetic Field</text>
<text transform="translate(95,347.5) rotate(-90)" textLength="11" lengthAdjust="spacingAndGlyphs">nT</text>
<g font-size="11">
<text transform="translate(72.5,452.5) rotate(-90)" textLength="25" lengthAdjust="spacingAndGlyphs">Mode</text>
<text transform="translate(82.5,453) rotate(-90)" textLength="78" lengthAdjust="spacingAndGlyphs">Narrow Min PA</text>
<text transform="translate(92.5,453) rotate(-90)" textLength="27" lengthAdjust="spacingAndGlyphs">Angle</text>
<text transform="translate(101,452.5) rotate(-90)" textLength="19" lengthAdjust="spacingAndGlyphs">deg</text>
</g>
<g font-size="14">
<text transform="translate(70,550) rotate(-90)" textLength="27" lengthAdjust="spacingAndGlyphs">Mode</text>
<text transform="translate(83,546) rotate(-90)" textLength="68" lengthAdjust="spacingAndGlyphs">All Min PA</text>
<text transform="translate(96,546) rotate(-90)" textLength="35" lengthAdjust="spacingAndGlyphs">Angle</text>
<text transform="translate(108,546) rotate(-90)" textLength="24" lengthAdjust="spacingAndGlyphs">deg</text>
</g>
</g>

<!-- Right rotated labels -->
<g class="g" text-anchor="middle" font-size="13.5">
<text transform="translate(893,254.5) rotate(90)" textLength="75" lengthAdjust="spacingAndGlyphs">Sensor Data</text>
<text transform="translate(882,255) rotate(90)" textLength="36" lengthAdjust="spacingAndGlyphs">VSO B</text>
<text transform="translate(869,255) rotate(90)" textLength="59" lengthAdjust="spacingAndGlyphs">Nanotesla</text>
<text transform="translate(858,255) rotate(90)" textLength="14" lengthAdjust="spacingAndGlyphs">nT</text>
<g font-size="10.5">
<text transform="translate(892,348.5) rotate(90)" textLength="59" lengthAdjust="spacingAndGlyphs">Sensor Data</text>
<text transform="translate(883,348.5) rotate(90)" textLength="83" lengthAdjust="spacingAndGlyphs">VEx MAG3 SAF-B</text>
<text transform="translate(873,347.5) rotate(90)" textLength="69" lengthAdjust="spacingAndGlyphs">Magnetic Field</text>
<text transform="translate(864,347.5) rotate(90)" textLength="11" lengthAdjust="spacingAndGlyphs">nT</text>
</g>
</g>
<g class="r" text-anchor="middle" font-size="11">
<text transform="translate(887,453) rotate(90)" textLength="25" lengthAdjust="spacingAndGlyphs">Mode</text>
<text transform="translate(877,453) rotate(90)" textLength="80" lengthAdjust="spacingAndGlyphs">Narrow Max PA</text>
<text transform="translate(867,453) rotate(90)" textLength="27" lengthAdjust="spacingAndGlyphs">Angle</text>
<text transform="translate(857,452.5) rotate(90)" textLength="19" lengthAdjust="spacingAndGlyphs">deg</text>
<g font-size="14">
<text transform="translate(888,546) rotate(90)" textLength="32" lengthAdjust="spacingAndGlyphs">Mode</text>
<text transform="translate(876,546) rotate(90)" textLength="72" lengthAdjust="spacingAndGlyphs">All Max PA</text>
<text transform="translate(863,546) rotate(90)" textLength="36" lengthAdjust="spacingAndGlyphs">Angle</text>
<text transform="translate(850,545.5) rotate(90)" textLength="23" lengthAdjust="spacingAndGlyphs">deg</text>
</g>
</g>
<g class="w" text-anchor="middle" font-size="10">
<text transform="translate(890,68.5) rotate(90)" textLength="131" lengthAdjust="spacingAndGlyphs">ergs/(cm**2-sr-sec-eV)</text>
<text transform="translate(890,647.5) rotate(90)" textLength="131" lengthAdjust="spacingAndGlyphs">ergs/(cm**2-sr-sec-eV)</text>
</g>

<!-- colorbar labels -->
<g class="w" font-size="9.5">
<text x="836" y="32" textLength="8" lengthAdjust="spacingAndGlyphs">EI</text>
<text x="836" y="610" textLength="8" lengthAdjust="spacingAndGlyphs">EI</text>
<text x="855" y="47" textLength="8" lengthAdjust="spacingAndGlyphs">10</text>
<text x="855" y="76" textLength="8" lengthAdjust="spacingAndGlyphs">10</text>
<text x="855" y="105" textLength="8" lengthAdjust="spacingAndGlyphs">10</text>
<text x="855" y="625" textLength="8" lengthAdjust="spacingAndGlyphs">10</text>
<text x="855" y="654" textLength="8" lengthAdjust="spacingAndGlyphs">10</text>
<text x="855" y="683" textLength="8" lengthAdjust="spacingAndGlyphs">10</text>
</g>
<g class="w" font-size="6.5">
<text x="863" y="43">−4</text><text x="863" y="72">−5</text><text x="863" y="101">−6</text>
<text x="863" y="621">−4</text><text x="863" y="650">−5</text><text x="863" y="679">−6</text>
</g>
</svg>
</body></html>
